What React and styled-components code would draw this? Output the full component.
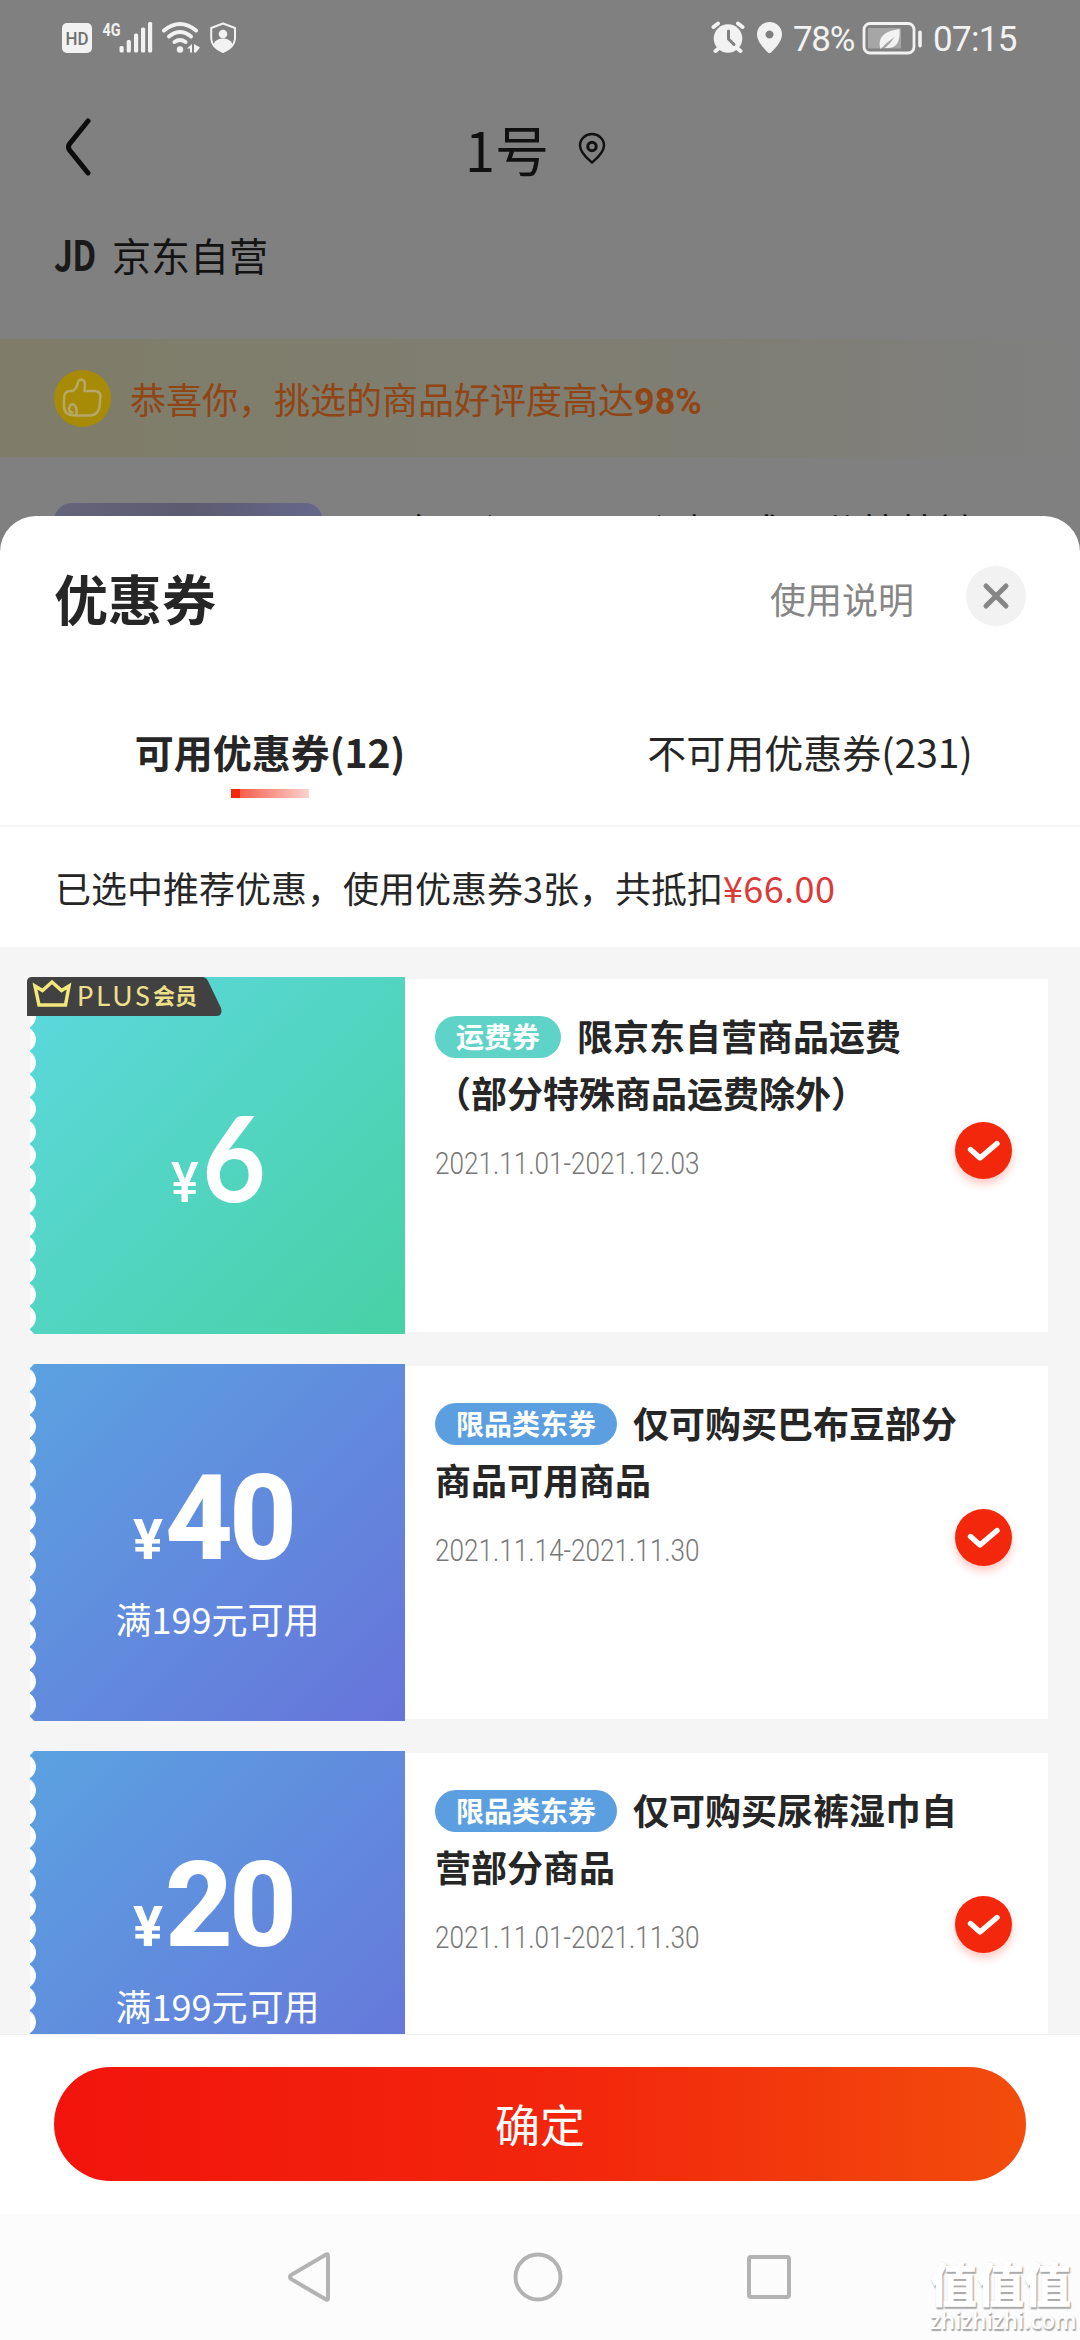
import React from 'react';
import styled, { createGlobalStyle } from 'styled-components';

const GlobalStyle = createGlobalStyle`
* { box-sizing: border-box; }
body {
    margin: 0;
    background: #808080;
    font-family: "Noto Sans CJK SC", sans-serif;
    color: #262626;
}
`
const Screen = styled.div`
position: relative;
display: flex;
flex-direction: column;
width: 1080px;
height: 2340px;
overflow: hidden;
background: #808080;
`
const Backdrop = styled.div`
height: 516px;
flex: none;
overflow: hidden;
`
const StatusBar = styled.div`
display: flex;
align-items: center;
justify-content: space-between;
height: 76px;
padding: 0 62px;
`
const StatusGroup = styled.div`
display: flex;
align-items: center;
`
const StatusText = styled.span`
display: block;
width: ${p => p.$width}px;
margin-left: ${p => p.$left}px;
font-family: Roboto, sans-serif;
font-size: 35px;
line-height: 40px;
white-space: nowrap;
color: #f2f2f2;
padding-top: 3px;
letter-spacing: ${p => p.$spacing || 0}px;
`
const NavBar = styled.div`
display: flex;
align-items: center;
height: 144px;
padding: 0 66px;
`
const NavTitle = styled.div`
display: flex;
align-items: center;
margin-left: 373px;
font-size: 54px;
line-height: 80px;
color: #111;
`
const TitleText = styled.span`
margin-right: 29px;
padding-top: 2px;
`
const ShopRow = styled.div`
display: flex;
align-items: center;
height: 119px;
padding: 0 54px 52px;
font-size: 39px;
color: #131313;
`
const ShopLogo = styled.span`
width: 58px;
padding-bottom: 2px;
font-size: 42px;
font-weight: 700;
letter-spacing: -1px;
line-height: 50px;
color: #1a1a1a;
transform: scaleX(0.8);
transform-origin: left;
`
const Banner = styled.div`
display: flex;
align-items: center;
height: 118px;
padding: 0 54px;
background: linear-gradient(90deg, #7f7d68, #7f7e74 67%, #808080);
font-size: 36px;
color: #914414;
svg { margin-right: 19px; }
`
const Rate = styled.b`
font-family: Roboto, sans-serif;
font-weight: 700;
`
const ProductRow = styled.div`
display: flex;
height: 59px;
margin-top: 46px;
padding-left: 54px;
`
const ProductTag = styled.div`
width: 269px;
height: 54px;
border-radius: 18px;
background: linear-gradient(90deg, #64647c, #5c5b70 50%, #67678c);
`
const ProductName = styled.span`
margin-left: ${p => p.$left}px;
padding-top: 5px;
font-size: 39px;
line-height: 44px;
white-space: nowrap;
color: #141414;
`
const Sheet = styled.div`
display: flex;
flex-direction: column;
height: 1698px;
flex: none;
border-radius: 36px 36px 0 0;
overflow: hidden;
background: #fff;
`
const SheetHeader = styled.div`
display: flex;
align-items: center;
height: 160px;
padding: 0 54px;
`
const SheetTitle = styled.h1`
flex: 1;
margin: 0;
font-size: 54px;
line-height: 80px;
font-weight: 700;
padding-top: 3px;
`
const HelpLink = styled.span`
margin-right: 52px;
padding-top: 3px;
font-size: 36px;
color: #868686;
`
const CloseButton = styled.button`
display: flex;
align-items: center;
justify-content: center;
width: 60px;
height: 60px;
padding: 0;
border: 0;
border-radius: 50%;
background: #f2f2f2;
`
const Tabs = styled.div`
display: flex;
height: 151px;
border-bottom: 2px solid #f4f4f4;
`
const Tab = styled.div`
display: flex;
flex-direction: column;
align-items: center;
flex: 1;
padding-top: 46px;
font-size: 39px;
line-height: 58px;
font-weight: ${p => (p.$active ? 700 : 400)};
`
const TabLine = styled.div`
width: 78px;
height: 9px;
margin-top: 9px;
background: linear-gradient(90deg, #f2270c 9px, #f4604c 9px, #fbd3ce);
`
const Summary = styled.div`
height: 120px;
padding-left: 55px;
font-size: 36px;
line-height: 120px;
`
const Price = styled.span`
color: #dc3a38;
letter-spacing: 0.4px;
`
const CouponList = styled.div`
flex: 1;
min-height: 0;
overflow: hidden;
padding: 30px 32px 0 30px;
background: #f5f5f5;
border-bottom: 1px solid #f0f0f0;
`
const Coupon = styled.div`
position: relative;
display: flex;
align-items: center;
height: 357px;
margin-bottom: 30px;
`
const CouponValue = styled.div`
width: 375px;
height: 357px;
flex: none;
padding-top: ${p => (p.$note ? 95 : 120)}px;
border-radius: 5px 0 0 5px;
color: #fff;
text-align: center;
background:
    radial-gradient(circle at -7px 11.6px, #fff 12.5px, transparent 13.3px) 0 4.5px / 6px 23.2px repeat-y,
    linear-gradient(135deg, ${p => p.$from}, ${p => p.$to});
`
const Amount = styled.div`
display: flex;
align-items: baseline;
justify-content: center;
height: 120px;
padding-right: ${p => (p.$round ? 0 : 9)}px;
padding-left: ${p => (p.$round ? 2 : 0)}px;
font-family: ${p => (p.$round ? 'Lato' : 'Roboto')}, sans-serif;
font-size: 118px;
line-height: 120px;
font-weight: ${p => (p.$round ? 700 : 800)};
letter-spacing: ${p => (p.$round ? 0 : -4)}px;
transform: scaleX(${p => (p.$round ? 0.93 : 1)});
`
const Yen = styled.span`
font-size: 56px;
font-family: Roboto, sans-serif;
font-weight: ${p => (p.$round ? 500 : 700)};
letter-spacing: 0;
margin-right: ${p => (p.$round ? 4 : 2)}px;
`
const Condition = styled.div`
padding-top: 12px;
font-size: 36px;
line-height: 54px;
`
const CouponBody = styled.div`
display: flex;
justify-content: space-between;
flex: 1;
height: 353px;
padding: 28px 36px 0 30px;
background: #fff;
`
const CouponInfo = styled.div`
width: 500px;
`
const CouponTitle = styled.div`
width: 530px;
font-size: 36px;
line-height: 57px;
font-weight: 700;
`
const Kind = styled.span`
display: inline-block;
height: 42px;
margin-right: 16px;
padding: 0 21px;
border-radius: 21px;
font-size: 28px;
line-height: 40px;
vertical-align: 3px;
color: #fff;
background: ${p => p.$color};
`
const CouponDate = styled.div`
width: 400px;
margin-top: 23px;
font-family: Roboto, sans-serif;
font-size: 31px;
line-height: 40px;
font-weight: 300;
color: #787878;
transform: scaleX(0.843);
transform-origin: left;
`
const Check = styled.div`
display: flex;
align-items: center;
justify-content: center;
flex: none;
width: 57px;
height: 57px;
margin-top: 115px;
border-radius: 50%;
background: #f2270c;
box-shadow: 0 5px 9px rgba(242, 39, 12, 0.25);
`
const PlusBadge = styled.div`
position: absolute;
left: -3px;
top: 0;
width: 195px;
height: 39px;
color: #eee08a;
font-size: 22px;
font-weight: 700;
svg { position: absolute; left: 0; top: 0; }
`
const PlusText = styled.span`
position: relative;
display: flex;
align-items: center;
height: 35px;
margin-left: 50px;
line-height: 35px;
`
const PlusLatin = styled.span`
padding-top: 2px;
font-family: Lato, sans-serif;
font-size: 27px;
font-weight: 400;
letter-spacing: 3px;
`
const Footer = styled.div`
height: 179px;
flex: none;
padding: 32px 54px 0;
`
const ConfirmButton = styled.button`
display: block;
width: 972px;
height: 114px;
border: 0;
border-radius: 57px;
padding: 0 0 2px;
font-family: inherit;
font-size: 45px;
color: #fff;
background: linear-gradient(90deg, #f2140c, #f2270c 55%, #f24d0c);
`
const SystemBar = styled.div`
display: flex;
align-items: center;
height: 126px;
flex: none;
padding: 0 286px;
justify-content: space-between;
background: #fcfcfc;
`
const Watermark = styled.div`
position: absolute;
left: 930px;
top: 2256px;
color: #fff;
text-shadow: 1px 2px 1px #aaa, 1px 1px 2px #bbb;
font-weight: 900;
font-size: 47px;
line-height: 52px;
white-space: nowrap;
`
const WatermarkSite = styled.div`
font-family: "Open Sans", sans-serif;
font-size: 22.5px;
font-weight: 600;
line-height: 26px;
`

const coupons = [
    { plus: true, round: true, value: '6', kind: '运费券', color: '#5fd3c8', from: '#5cd8de', to: '#48d1a5',
        title: '限京东自营商品运费（部分特殊商品运费除外）', date: '2021.11.01-2021.12.03' },
    { value: '40', note: '满199元可用', kind: '限品类东券', color: '#5c9fe0', from: '#5ba2e1', to: '#6774da',
        title: '仅可购买巴布豆部分商品可用商品', date: '2021.11.14-2021.11.30' },
    { value: '20', note: '满199元可用', kind: '限品类东券', color: '#5c9fe0', from: '#5ba2e1', to: '#6774da',
        title: '仅可购买尿裤湿巾自营部分商品', date: '2021.11.01-2021.11.30' },
]

const LeftStatusIcons = () => (
    <svg width="176" height="44" viewBox="62 16 176 44" fill="#f2f2f2">
        <rect x="62" y="23" width="30" height="30" rx="5" />
        <text x="77" y="45" textAnchor="middle" fontFamily="Roboto" fontWeight="500" fontSize="19" textLength="23" lengthAdjust="spacingAndGlyphs" fill="#707070">HD</text>
        <text x="102.5" y="36" fontFamily="Roboto" fontWeight="700" fontSize="19" textLength="18" lengthAdjust="spacingAndGlyphs">4G</text>
        <rect x="119.5" y="46" width="4.2" height="6.5" rx="1.5" />
        <rect x="126.7" y="40" width="4.2" height="12.5" rx="1.5" />
        <rect x="134" y="33.5" width="4.2" height="19" rx="1.5" />
        <rect x="141" y="27.5" width="4.2" height="25" rx="1.5" />
        <rect x="148" y="22" width="4.2" height="30.5" rx="1.5" />
        <g fill="none" stroke="#f2f2f2" strokeWidth="4" strokeLinecap="round">
            <path d="M164 30.5 Q180 17.5 196 30.5" />
            <path d="M169 36.5 Q180 27.5 191 36.5" />
            <path d="M174.5 42 Q180 38 185.5 42" />
        </g>
        <circle cx="180" cy="49.5" r="3.2" />
        <path d="M187 48.5 L192 44 V52.5 H190 V48.5 Z M194 44 L200 47.5 L196 52.5 H194 Z" />
        <path d="M223 23.5 L235 28 V39 Q234 48 223 52 Q212 48 211.2 39 V28 Z" fill="none" stroke="#f2f2f2" strokeWidth="2" strokeLinejoin="round" />
        <circle cx="223" cy="34" r="4.3" />
        <path d="M213.5 44 Q216 38.5 223 38.5 Q230 38.5 232.5 44 Q230 50 223 52.5 Q216 50 213.5 44 Z" />
    </svg>
)

const AlarmPinIcons = () => (
    <svg width="72" height="34" viewBox="710 21 72 34" fill="#f2f2f2">
        <circle cx="727" cy="38.5" r="14.3" />
        <path d="M712.5 27 L717 23.5 M741.5 27 L737 23.5 M714.5 51 L718 48 M739.5 51 L736 48" stroke="#f2f2f2" strokeWidth="4" strokeLinecap="round" />
        <path d="M727.5 31 V39 L733 44.5" fill="none" stroke="#808080" strokeWidth="3" strokeLinecap="round" />
        <path fillRule="evenodd" d="M768.5 22 C775.5 22 781 27.5 781 34.5 C781 42 772.5 50 770 52.5 Q768.5 54 767 52.5 C764.5 50 756 42 756 34.5 C756 27.5 761.5 22 768.5 22 Z M768.5 30.5 a4 4 0 1 0 .01 0 Z" />
    </svg>
)

const BatteryIcon = () => (
    <svg width="60" height="34" viewBox="861 20 60 34">
        <rect x="863" y="22.5" width="50" height="29.5" rx="6" fill="none" stroke="#f2f2f2" strokeWidth="2.8" />
        <rect x="867" y="27" width="33" height="20.5" rx="1" fill="#a6a6a6" />
        <rect x="917.2" y="29.5" width="3.6" height="17" rx="1.8" fill="#f2f2f2" />
        <path d="M898.5 28 C899.5 42 895 48 884 47 Q890 42 893.5 36 Q886 41 879.5 48 C876 36 884 30 898.5 28 Z" fill="#f2f2f2" />
    </svg>
)

const ThumbIcon = () => (
    <svg width="57" height="57" viewBox="0 0 57 57">
        <circle cx="28.5" cy="28.5" r="28.5" fill="#a78a06" />
        <path d="M17 21 H19 Q22 19 23.5 14.5 Q24 9.5 27.5 9.5 Q31 10 31 15 L30.5 21 H41 Q46.5 21.5 46.5 26 L45.5 37 Q44 44.5 37 45.5 H22 M22 45.5 Q10 46 10 36 V28 Q10 21 17 21 M22 45.5 Q24 40 20.5 35 Q16.5 32.5 15 38 Q15 42.5 18.5 42.5" fill="none" stroke="#b5a868" strokeWidth="2.5" strokeLinecap="round" strokeLinejoin="round" />
    </svg>
)

const CouponCard = ({ item }) => (
    <Coupon>
        <CouponValue $from={item.from} $to={item.to} $note={item.note}>
            <Amount $round={item.round}><Yen $round={item.round}>¥</Yen>{item.value}</Amount>
            {item.note && <Condition>{item.note}</Condition>}
        </CouponValue>
        <CouponBody>
            <CouponInfo>
                <CouponTitle><Kind $color={item.color}>{item.kind}</Kind>{item.title}</CouponTitle>
                <CouponDate>{item.date}</CouponDate>
            </CouponInfo>
            <Check>
                <svg width="36" height="28" viewBox="0 0 36 28">
                    <path d="M4.5 12.5 L14 21 L31 6.5" fill="none" stroke="#fff" strokeWidth="5.4" strokeLinecap="round" strokeLinejoin="round" />
                </svg>
            </Check>
        </CouponBody>
        {item.plus && <PlusBadge>
            <svg width="195" height="39" viewBox="0 0 195 39">
                <path d="M5 0 H175 Q179 0 181 4 L194 31 Q196 39 189 39 H0 V5 Q0 0 5 0 Z" fill="#414141" />
                <path d="M8 9 L15.5 13.5 L25 5 L34.5 13.5 L42 9 L38.5 28 H12 Z" fill="none" stroke="#f3e67a" strokeWidth="3.5" />
            </svg>
            <PlusText><PlusLatin>PLUS</PlusLatin>会员</PlusText>
        </PlusBadge>}
    </Coupon>
)

const App = () => {
return <Screen>
    <GlobalStyle />
    <Backdrop>
        <StatusBar>
            <LeftStatusIcons />
            <StatusGroup>
                <AlarmPinIcons />
                <StatusText $left={10} $width={69} $spacing={-1.3}>78%</StatusText>
                <BatteryIcon />
                <StatusText $left={11} $width={85} $spacing={-0.7}>07:15</StatusText>
            </StatusGroup>
        </StatusBar>
        <NavBar>
            <svg width="26" height="60" viewBox="0 0 26 60">
                <path d="M22 3 L3.5 26 Q1.5 29 3.5 32 L22 55" fill="none" stroke="#0c0c0c" strokeWidth="5" strokeLinecap="round" />
            </svg>
            <NavTitle>
                <TitleText>1号</TitleText>
                <svg width="28" height="32" viewBox="0 0 28 32" fill="none" stroke="#111" strokeWidth="2.5">
                    <path d="M14 2 C20.5 2 26 7 26 13.5 C26 21 18 27 14 30.5 C10 27 2 21 2 13.5 C2 7 7.5 2 14 2 Z" strokeLinejoin="round" />
                    <circle cx="14" cy="14.5" r="4.2" strokeWidth="3" />
                </svg>
            </NavTitle>
        </NavBar>
        <ShopRow><ShopLogo>JD</ShopLogo>京东自营</ShopRow>
        <Banner><ThumbIcon /><span>恭喜你，挑选的商品好评度高达<Rate>98%</Rate></span></Banner>
        <ProductRow>
            <ProductTag />
            <ProductName $left={40}>巴布豆(BOBDOG)</ProductName>
            <ProductName $left={16}>极, 成品分拉拉裤</ProductName>
        </ProductRow>
    </Backdrop>
    <Sheet>
        <SheetHeader>
            <SheetTitle>优惠券</SheetTitle>
            <HelpLink>使用说明</HelpLink>
            <CloseButton>
                <svg width="28" height="28" viewBox="0 0 28 28">
                    <path d="M4 4 L24 24 M24 4 L4 24" stroke="#868686" strokeWidth="5" strokeLinecap="round" />
                </svg>
            </CloseButton>
        </SheetHeader>
        <Tabs>
            <Tab $active>可用优惠券(12)<TabLine /></Tab>
            <Tab>不可用优惠券(231)</Tab>
        </Tabs>
        <Summary>已选中推荐优惠，使用优惠券3张，共抵扣<Price>¥66.00</Price></Summary>
        <CouponList>
            {coupons.map(item => <CouponCard key={item.title} item={item} />)}
        </CouponList>
        <Footer><ConfirmButton>确定</ConfirmButton></Footer>
    </Sheet>
    <SystemBar>
        <svg width="46" height="52" viewBox="0 0 46 52"><path d="M40 3.5 Q42 2.5 42 5 V47 Q42 49.5 40 48.5 L5 28 Q3 26 5 24 Z" fill="none" stroke="#b3b3b3" strokeWidth="4" /></svg>
        <svg width="50" height="50" viewBox="0 0 50 50"><circle cx="25" cy="25" r="22.5" fill="none" stroke="#b3b3b3" strokeWidth="4" /></svg>
        <svg width="50" height="50" viewBox="0 0 50 50"><rect x="5" y="5" width="40" height="40" rx="2" fill="none" stroke="#b3b3b3" strokeWidth="4" /></svg>
    </SystemBar>
    <Watermark>值值值<WatermarkSite>zhizhizhi.com</WatermarkSite></Watermark>
</Screen>;
};

export default App;
